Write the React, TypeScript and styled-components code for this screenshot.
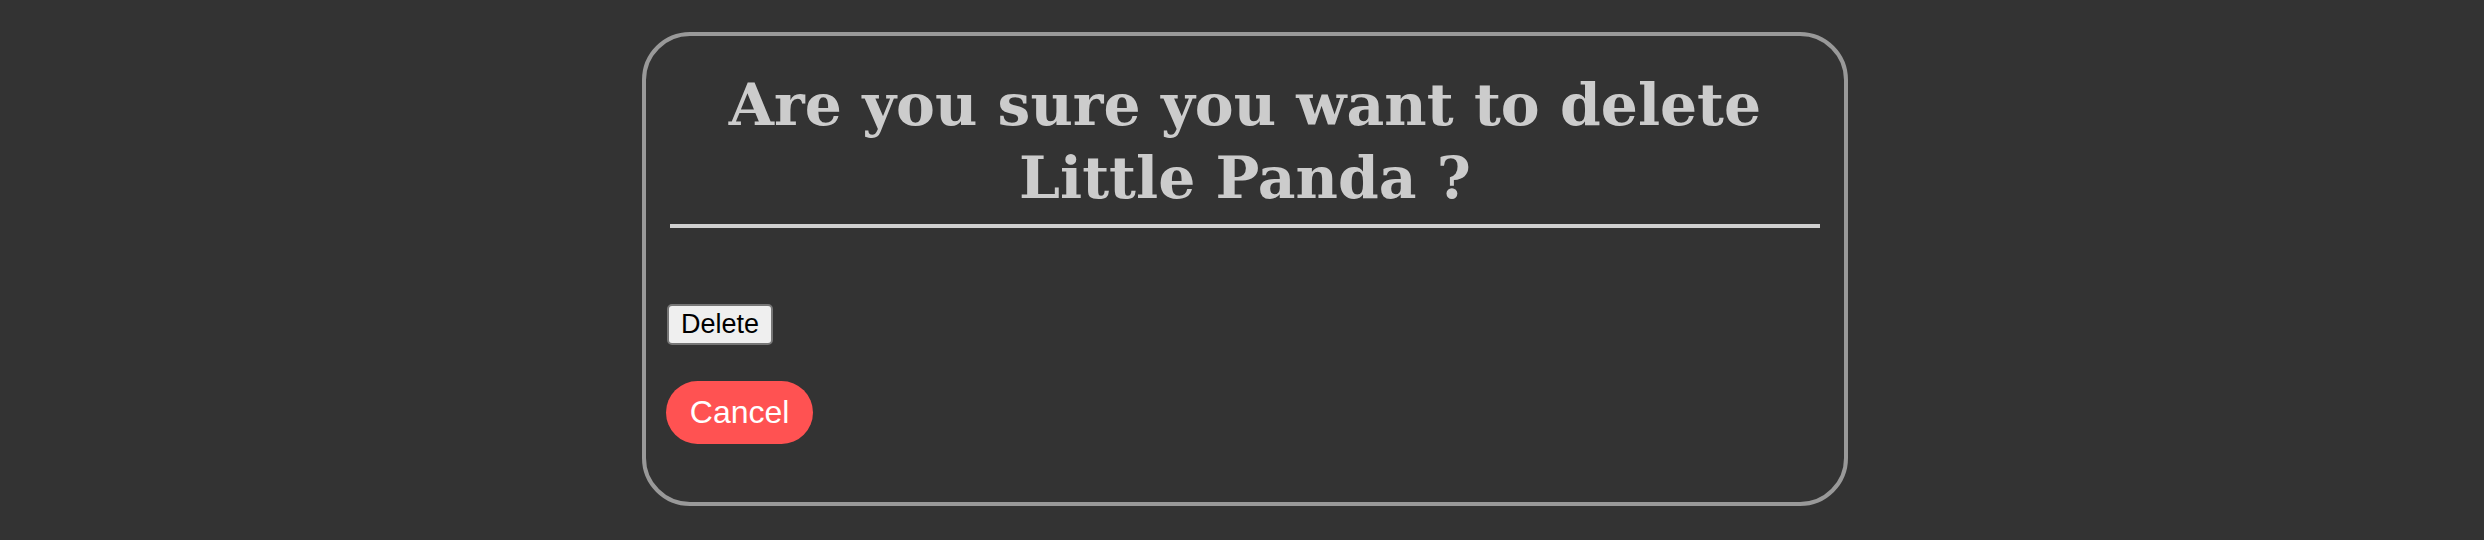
import React from "react";
import styled, { createGlobalStyle } from "styled-components";

const Global = createGlobalStyle`
  html, body {
    margin: 0;
    padding: 0;
    background: #333333;
  }
  body {
    font-family: "Liberation Sans", Arial, sans-serif;
  }
`;

const Page = styled.div`
  display: flex;
  justify-content: center;
  padding: 32px 0 0 6px;
  min-height: 540px;
  box-sizing: border-box;
`;

const Card = styled.div`
  width: 1206px;
  height: 474px;
  box-sizing: border-box;
  border: 4px solid #999999;
  border-radius: 48px;
  padding: 0 20px;
  display: flex;
  flex-direction: column;
  align-items: flex-start;
`;

const Title = styled.h1`
  align-self: stretch;
  margin: 32px 0 0;
  font-family: "DejaVu Serif", Georgia, serif;
  font-weight: bold;
  font-size: 58.3px;
  line-height: 73px;
  color: #cccccc;
  text-align: center;
`;

const Rule = styled.hr`
  align-self: stretch;
  margin: 10px 4px 0;
  height: 4px;
  border: none;
  background: #d0d0d0;
`;

const DeleteButton = styled.button`
  margin: 76px 0 0 1px;
  font-family: "Liberation Sans", Arial, sans-serif;
  font-size: 27px;
  line-height: normal;
  color: #000000;
  background: #efefef;
  border: 2px solid #767676;
  border-radius: 5px;
  padding: 3px 12px;
`;

const CancelButton = styled.button`
  margin-top: 36px;
  font-family: "Liberation Sans", Arial, sans-serif;
  font-size: 32px;
  line-height: normal;
  color: #ffffff;
  background: #ff5252;
  border: none;
  border-radius: 999px;
  padding: 12.8px 23.8px;
`;

export default function App() {
  return (
    <>
      <Global />
      <Page>
        <Card>
          <Title>
            Are you sure you want to delete
            <br />
            Little Panda ?
          </Title>
          <Rule />
          <DeleteButton>Delete</DeleteButton>
          <CancelButton>Cancel</CancelButton>
        </Card>
      </Page>
    </>
  );
}
